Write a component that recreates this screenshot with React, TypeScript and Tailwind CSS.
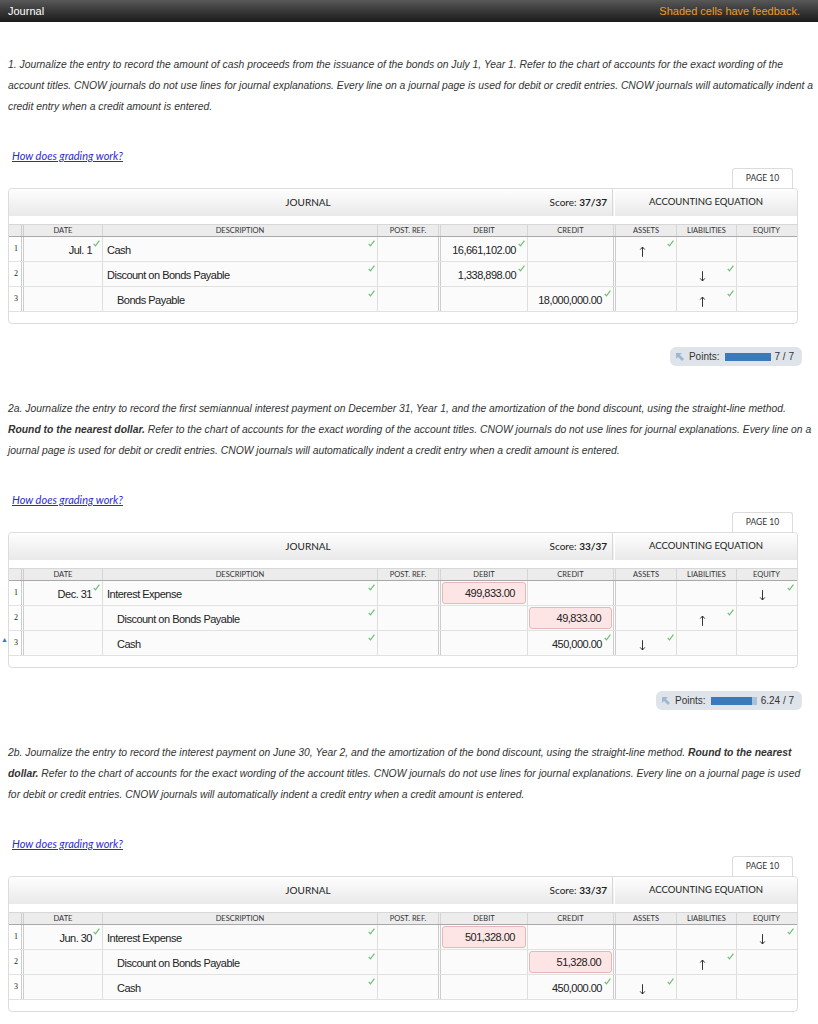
import React from 'react'

type Dir = 'up' | 'down'

type Row = {
  date?: string
  desc: string
  indent?: boolean
  debit?: string
  debitBad?: boolean
  credit?: string
  creditBad?: boolean
  assets?: Dir
  liab?: Dir
  equity?: Dir
  marker?: boolean
}

type Section = {
  lines: React.ReactNode[]
  score: string
  points?: number
  pointsLabel?: string
  rows: Row[]
}

const sections: Section[] = [
  {
    lines: [
      '1. Journalize the entry to record the amount of cash proceeds from the issuance of the bonds on July 1, Year 1. Refer to the chart of accounts for the exact wording of the',
      'account titles. CNOW journals do not use lines for journal explanations. Every line on a journal page is used for debit or credit entries. CNOW journals will automatically indent a',
      'credit entry when a credit amount is entered.',
    ],
    score: '37/37',
    points: 7,
    pointsLabel: '7 / 7',
    rows: [
      { date: 'Jul. 1', desc: 'Cash', debit: '16,661,102.00', assets: 'up' },
      { desc: 'Discount on Bonds Payable', debit: '1,338,898.00', liab: 'down' },
      { desc: 'Bonds Payable', indent: true, credit: '18,000,000.00', liab: 'up' },
    ],
  },
  {
    lines: [
      '2a. Journalize the entry to record the first semiannual interest payment on December 31, Year 1, and the amortization of the bond discount, using the straight-line method.',
      <>
        <b>Round to the nearest dollar.</b> Refer to the chart of accounts for the exact wording of the account titles. CNOW journals do not use lines for journal explanations. Every line on a
      </>,
      'journal page is used for debit or credit entries. CNOW journals will automatically indent a credit entry when a credit amount is entered.',
    ],
    score: '33/37',
    points: 6.24,
    pointsLabel: '6.24 / 7',
    rows: [
      { date: 'Dec. 31', desc: 'Interest Expense', debit: '499,833.00', debitBad: true, equity: 'down' },
      { desc: 'Discount on Bonds Payable', indent: true, credit: '49,833.00', creditBad: true, liab: 'up' },
      { desc: 'Cash', indent: true, credit: '450,000.00', assets: 'down', marker: true },
    ],
  },
  {
    lines: [
      <>
        2b. Journalize the entry to record the interest payment on June 30, Year 2, and the amortization of the bond discount, using the straight-line method. <b>Round to the nearest</b>
      </>,
      <>
        <b>dollar.</b> Refer to the chart of accounts for the exact wording of the account titles. CNOW journals do not use lines for journal explanations. Every line on a journal page is used
      </>,
      'for debit or credit entries. CNOW journals will automatically indent a credit entry when a credit amount is entered.',
    ],
    score: '33/37',
    rows: [
      { date: 'Jun. 30', desc: 'Interest Expense', debit: '501,328.00', debitBad: true, equity: 'down' },
      { desc: 'Discount on Bonds Payable', indent: true, credit: '51,328.00', creditBad: true, liab: 'up' },
      { desc: 'Cash', indent: true, credit: '450,000.00', assets: 'down' },
    ],
  },
]

function Check() {
  return (
    <svg className="absolute right-[2px] top-[3px]" width="7" height="7" viewBox="0 0 7 7">
      <path d="M0.7 3.9 L2.5 5.9 L6.4 0.7" fill="none" stroke="#6dc072" strokeWidth="1.2" />
    </svg>
  )
}

function Arrow({ dir }: { dir: Dir }) {
  return (
    <svg width="7" height="11" viewBox="0 0 7 11" className={dir === 'down' ? 'rotate-180' : ''}>
      <path d="M3.5 10.8 V1" stroke="#333" strokeWidth="1" fill="none" />
      <path d="M1.2 3.6 L3.5 1 L5.8 3.6" stroke="#333" strokeWidth="1" fill="none" />
    </svg>
  )
}

function Amount({ value, bad }: { value?: string; bad?: boolean }) {
  if (!value) return null
  if (bad) {
    return (
      <div className="flex h-full w-full items-center justify-end rounded-[3px] border border-[#e5b9b9] bg-[#fde5e5] pr-[10px] pt-[1px]">
        {value}
      </div>
    )
  }
  return (
    <>
      <div className="flex h-full w-full items-center justify-end pr-[10px] pt-[3px]">{value}</div>
      <Check />
    </>
  )
}

function ArrowCell({ dir, width, last }: { dir?: Dir; width: string; last?: boolean }) {
  return (
    <div className={`relative flex h-full items-center justify-center pr-[8px] pt-[4px] ${width} ${last ? '' : 'border-r border-[#dedede]'}`}>
      {dir && <Arrow dir={dir} />}
      {dir && <Check />}
    </div>
  )
}

function JournalBox({ score, rows }: { score: string; rows: Row[] }) {
  const head = 'flex items-center justify-center h-full border-r border-[#d6d6d6]'
  return (
    <div className="w-[790px] h-[136px] rounded-[4px] border border-[#dcdcdc] bg-white">
      {/* title bar */}
      <div className="flex h-[27px] rounded-t-[4px] bg-linear-to-b from-[#fefefe] to-[#e9e9e9] font-['Lato',sans-serif] text-[10px] text-[#222]">
        <div className="flex w-[603px] items-center">
          <div className="flex-1" />
          <span>JOURNAL</span>
          <div className="flex flex-1 justify-end pr-[5px]">
            <span>
              Score: <b>{score}</b>
            </span>
          </div>
        </div>
        <div className="w-[3px] border-l border-r border-l-[#d9d9d9] border-r-white" />
        <div className="flex flex-1 items-center justify-center text-[9.5px]">ACCOUNTING EQUATION</div>
      </div>
      <div className="h-[8px]" />
      {/* column headings */}
      <div className="flex h-[13px] border-t border-b border-t-[#d7d7d7] border-b-[#a9a9a9] bg-[#ececec] font-['Lato',sans-serif] text-[7.5px] leading-none text-[#333]">
        <div className="h-full w-[15px] border-r-[3px] border-double border-[#cdcdcd]" />
        <div className={`${head} w-[79px]`}>DATE</div>
        <div className={`${head} w-[275px]`}>DESCRIPTION</div>
        <div className={`${head} w-[63px] border-r-[3px] border-double border-[#cdcdcd]`}>POST. REF.</div>
        <div className={`${head} w-[87px]`}>DEBIT</div>
        <div className={`${head} w-[88px] border-r-[3px] border-double border-[#cdcdcd]`}>CREDIT</div>
        <div className={`${head} w-[61px]`}>ASSETS</div>
        <div className={`${head} w-[60px]`}>LIABILITIES</div>
        <div className="flex h-full w-[59px] items-center justify-center">EQUITY</div>
      </div>
      {/* rows */}
      {rows.map((r, i) => (
        <div
          key={i}
          className="relative flex h-[25px] border-b border-[#e1e1e1] bg-[#fbfbfb] font-['Liberation_Sans',sans-serif] text-[11px] tracking-[-0.5px] text-[#222]"
        >
          {r.marker && (
            <span className="absolute left-[-8px] top-[5px] text-[7px] leading-none text-[#2f78d6]">▲</span>
          )}
          <div className="flex h-full w-[15px] items-center border-r-[3px] border-double border-[#cdcdcd] bg-white pl-[5px] font-['Liberation_Serif',serif] text-[8px] tracking-normal">
            {i + 1}
          </div>
          <div className="relative flex h-full w-[79px] items-center justify-end border-r border-[#dedede] pr-[10px] pt-[3px]">
            {r.date}
            {r.date && <Check />}
          </div>
          <div className={`relative flex h-full w-[275px] items-center border-r border-[#dedede] pt-[3px] ${r.indent ? 'pl-[14px]' : 'pl-[4px]'}`}>
            {r.desc}
            <Check />
          </div>
          <div className="h-full w-[63px] border-r-[3px] border-double border-[#cdcdcd]" />
          <div className="relative h-full w-[87px] border-r border-[#dedede] p-[1px]">
            <Amount value={r.debit} bad={r.debitBad} />
          </div>
          <div className="relative h-full w-[88px] border-r-[3px] border-double border-[#cdcdcd] p-[1px]">
            <Amount value={r.credit} bad={r.creditBad} />
          </div>
          <ArrowCell dir={r.assets} width="w-[61px]" />
          <ArrowCell dir={r.liab} width="w-[60px]" />
          <ArrowCell dir={r.equity} width="w-[59px]" last />
        </div>
      ))}
    </div>
  )
}

function Points({ value, label }: { value: number; label: string }) {
  const pct = (value / 7) * 100
  return (
    <div className="flex justify-end pr-[16px]">
      <div className="flex h-[19px] items-center rounded-[6px] bg-[#dee4e9] pl-[5px] pr-[8px] font-['Liberation_Sans',sans-serif] text-[10px] text-[#333]">
        <svg width="10" height="10" viewBox="0 0 10 10" className="mr-[4px]">
          <path d="M1 1 H7 L5 3 L9 7 L7 9 L3 5 L1 7 Z" fill="#9db9d2" />
        </svg>
        <span>Points:</span>
        <div className="ml-[5px] h-[8px] w-[46px] bg-[#a8c2dc]">
          <div className="h-full bg-[#3b78bc]" style={{ width: `${pct}%` }} />
        </div>
        <span className="ml-[4px]">{label}</span>
      </div>
    </div>
  )
}

export default function App() {
  return (
    <div className="min-h-screen w-[818px] bg-white">
      {/* Top bar */}
      <div className="flex h-[22px] items-center justify-between bg-linear-to-b from-[#585858] to-[#1b1b1b] pl-[8px] pr-[18px] font-['Liberation_Sans',sans-serif] text-[11px]">
        <span className="text-white">Journal</span>
        <span className="text-[#f39b21]">Shaded cells have feedback.</span>
      </div>

      {sections.map((s, idx) => (
        <div key={idx} className="pt-[31.5px]">
          <div className="px-[8px] font-['Liberation_Sans',sans-serif] text-[10.35px] italic leading-[21px] text-[#333]">
            {s.lines.map((l, j) => (
              <div key={j} className="whitespace-nowrap">
                {l}
              </div>
            ))}
          </div>
          <a
            href="#"
            className="mt-[32.5px] block h-[14px] pl-[12px] font-['Lato',sans-serif] text-[11px] italic leading-[14px] text-[#2b2bd0] underline"
          >
            How does grading work?
          </a>
          <div className="mt-[5px] flex justify-end pr-[25px]">
            <div className="flex h-[20px] w-[61px] items-center justify-center rounded-t-[3px] border border-b-0 border-[#dcdcdc] bg-white font-['Lato',sans-serif] text-[8.5px] text-[#333]">
              PAGE 10
            </div>
          </div>
          <div className="pl-[8px]">
            <JournalBox score={s.score} rows={s.rows} />
          </div>
          {s.points !== undefined && s.pointsLabel && (
            <div className="mt-[23px]">
              <Points value={s.points} label={s.pointsLabel} />
            </div>
          )}
        </div>
      ))}
    </div>
  )
}
